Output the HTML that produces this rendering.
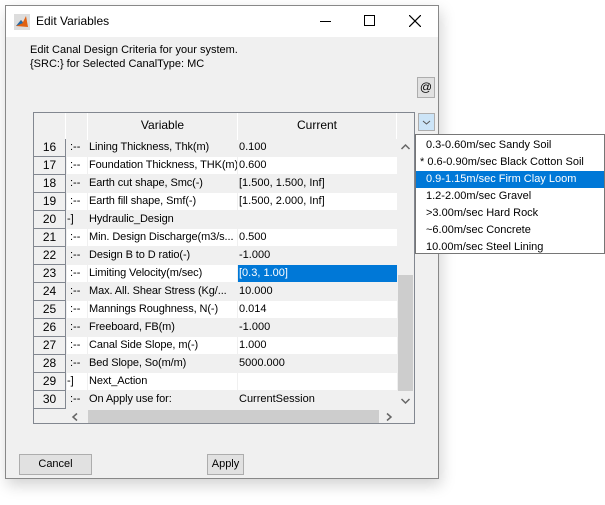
<!DOCTYPE html>
<html><head><meta charset="utf-8"><style>
*{margin:0;padding:0;box-sizing:border-box}
body{width:605px;height:505px;background:#fff;font-family:"Liberation Sans",sans-serif;font-size:11px;color:#000;position:relative;overflow:hidden}
.win{position:absolute;left:5px;top:5px;width:434px;height:474px;background:#f0f0f0;border:1px solid #888;box-shadow:2px 6px 14px rgba(0,0,0,.18)}
.title{position:absolute;left:0;top:0;width:432px;height:31px;background:#fff}
.title .t{position:absolute;left:30px;top:8px;font-size:12px}
.a{position:absolute}
.tbl{position:absolute;left:33px;top:112px;width:382px;height:312px;border:1px solid #828790;background:#f0f0f0;overflow:hidden}
.row{position:absolute;left:0;height:18px;width:363px}
.row div{position:absolute;top:0;height:17px;line-height:17px;white-space:nowrap;overflow:hidden}
.num{left:0;width:32px;text-align:center;font-size:12px;background:#f0f0f0;border-right:1px solid #828790;border-bottom:1px solid #828790;height:18px!important}
.mk{left:33px;width:20px;padding-left:3px}
.nm{left:54px;width:149px;padding-left:1px;letter-spacing:-0.1px}
.vl{left:204px;width:159px;padding-left:1px}
.hd{position:absolute;top:0;height:27px;border-right:1px solid #fff;font-size:12px;text-align:center;padding-top:5px;background:#f0f0f0}
.btn{position:absolute;background:#e1e1e1;border:1px solid #adadad;text-align:center;line-height:19px}
.pop{position:absolute;left:415px;top:134px;width:190px;height:120px;background:#fff;border:1px solid #767676;padding-top:2px}
.pop div{height:17px;line-height:17px;padding-left:10px;white-space:nowrap}
</style></head><body>
<div class="win">
 <div class="title">
  <svg class="a" style="left:8px;top:8px" width="16" height="16" viewBox="0 0 16 16"><rect width="16" height="16" fill="#ddd"/><path d="M2 12 L7 6 L9 8 L12 2 L14 13 Z" fill="#e06010"/><path d="M2 12 L7 6 L9 9 Z" fill="#1a6bb0"/></svg>
  <div class="t">Edit Variables</div>
  <div class="a" style="left:314px;top:15px;width:11px;height:1px;background:#000"></div>
  <div class="a" style="left:358px;top:9px;width:11px;height:11px;border:1px solid #000"></div>
  <svg class="a" style="left:403px;top:9px" width="12" height="12"><path d="M0 0L12 12M12 0L0 12" stroke="#000" stroke-width="1.2"/></svg>
 </div>
 <div class="a" style="left:24px;top:38px">Edit Canal Design Criteria for your system.</div>
 <div class="a" style="left:24px;top:52px">{SRC:} for Selected CanalType: MC</div>
 <div class="a" style="left:411px;top:71px;width:18px;height:21px;border:1px solid #adadad;background:#e1e1e1;text-align:center;line-height:19px;font-size:12px">@</div>
 <div class="a" style="left:412px;top:107px;width:17px;height:18px;border:1px solid #adadad;background:#cce4f7"><svg width="15" height="16"><path d="M4 7L7.5 10L11 7" stroke="#555" fill="none"/></svg></div>
 <div class="btn" style="left:13px;top:448px;width:73px;height:21px">Cancel</div>
 <div class="btn" style="left:201px;top:448px;width:37px;height:21px">Apply</div>
</div>
<div class="tbl">
 <div class="hd" style="left:0;width:32px"></div>
 <div class="hd" style="left:33px;width:21px"></div>
 <div class="hd" style="left:54px;width:150px">Variable</div>
 <div class="hd" style="left:204px;width:159px">Current</div>
 <div id="rows"></div>
 <div class="a" style="left:363px;top:26px;width:17px;height:270px;background:#f0f0f0"></div>
 <svg class="a" style="left:366px;top:30px" width="11" height="8"><path d="M1.5 6L5.5 2L9.5 6" stroke="#666" fill="none" stroke-width="1.5"/></svg>
 <div class="a" style="left:364px;top:162px;width:15px;height:116px;background:#cdcdcd"></div>
 <svg class="a" style="left:366px;top:284px" width="11" height="8"><path d="M1.5 2L5.5 6L9.5 2" stroke="#666" fill="none" stroke-width="1.5"/></svg>
 <div class="a" style="left:33px;top:296px;width:347px;height:15px;background:#f0f0f0"></div>
 <svg class="a" style="left:36px;top:299px" width="10" height="10"><path d="M7 1.5L3 5L7 8.5" stroke="#666" fill="none" stroke-width="1.5"/></svg>
 <div class="a" style="left:54px;top:297px;width:291px;height:14px;background:#cdcdcd"></div>
 <svg class="a" style="left:350px;top:299px" width="10" height="10"><path d="M3 1.5L7 5L3 8.5" stroke="#666" fill="none" stroke-width="1.5"/></svg>
</div>
<div class="pop">
 <div>0.3-0.60m/sec Sandy Soil</div>
 <div style="padding-left:4px">* 0.6-0.90m/sec Black Cotton Soil</div>
 <div style="background:#0078d7;color:#fff">0.9-1.15m/sec Firm Clay Loom</div>
 <div>1.2-2.00m/sec Gravel</div>
 <div>&gt;3.00m/sec Hard Rock</div>
 <div>~6.00m/sec Concrete</div>
 <div>10.00m/sec Steel Lining</div>
</div>
<script>
var d=[[16,":--","Lining Thickness, Thk(m)","0.100"],[17,":--","Foundation Thickness, THK(m)","0.600"],[18,":--","Earth cut shape, Smc(-)","[1.500, 1.500, Inf]"],[19,":--","Earth fill shape, Smf(-)","[1.500, 2.000, Inf]"],[20,"-]","Hydraulic_Design",""],[21,":--","Min. Design Discharge(m3/s...","0.500"],[22,":--","Design B to D ratio(-)","-1.000"],[23,":--","Limiting Velocity(m/sec)","[0.3, 1.00]"],[24,":--","Max. All. Shear Stress (Kg/...","10.000"],[25,":--","Mannings Roughness, N(-)","0.014"],[26,":--","Freeboard, FB(m)","-1.000"],[27,":--","Canal Side Slope, m(-)","1.000"],[28,":--","Bed Slope, So(m/m)","5000.000"],[29,"-]","Next_Action",""],[30,":--","On Apply use for:","CurrentSession"]];
var h="";d.forEach(function(r,i){var bg=i%2?"#fff":"#f0f0f0";var mk=r[1]=="-]"?"padding-left:0":"";var vs=r[0]==23?"background:#0078d7;color:#fff":"background:"+bg;
h+='<div class="row" style="top:'+(26+i*18)+'px"><div class="num">'+r[0]+'</div><div class="mk" style="background:'+bg+';'+mk+'">'+r[1]+'</div><div class="nm" style="background:'+bg+'">'+r[2]+'</div><div class="vl" style="'+vs+'">'+r[3]+'</div></div>';});
document.getElementById("rows").innerHTML=h;
</script>
</body></html>
